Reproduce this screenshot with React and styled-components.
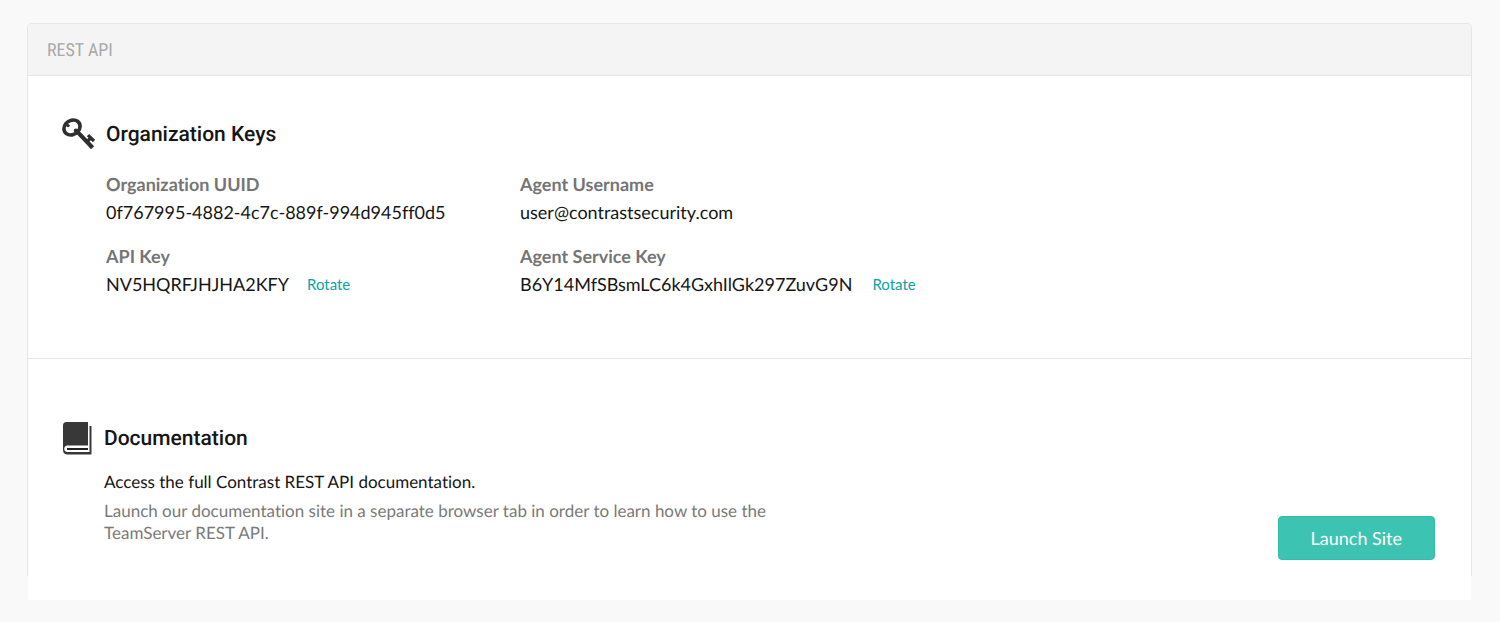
import React from "react";
import styled, { createGlobalStyle } from "styled-components";

const GlobalStyle = createGlobalStyle`
  *, *::before, *::after { box-sizing: border-box; }
  body {
    margin: 0;
    background: #f9f9f9;
    color: #161616;
    font: 18px/22px Lato, "Open Sans", sans-serif;
    font-variant-ligatures: none;
    text-rendering: geometricPrecision;
  }
  h1, h2, p, dl, dt, dd { margin: 0; }
`;

const Page = styled.main`
  padding: 23px 28px 22px 27px;
`;

const Panel = styled.div`
  border: 1px solid #e6e6e6;
  border-bottom: 0;
  border-radius: 5px 5px 0 0;
  background: #fff;
`;

const PanelHeader = styled.header`
  padding: 16px 19px 13px;
  border-bottom: 1px solid #e6e6e6;
  border-radius: 4px 4px 0 0;
  background: #f4f4f4;
`;

const PanelTitle = styled.h1`
  color: #a9a9a9;
  font: 400 18px/22px "Roboto Condensed", Roboto, sans-serif;
`;

const PanelTail = styled.div`
  height: 24px;
  margin: 0 1px;
  background: #fff;
`;

const Section = styled.section`
  display: grid;
  grid-template-columns: ${(p) => p.$icon}px 1fr;
  column-gap: 10px;
  padding: ${(p) => p.$pad};

  & + & { border-top: 1px solid #e6e6e6; }
`;

const SectionTitle = styled.h2`
  font: 500 21px/36px Roboto, sans-serif;
`;

const SectionBody = styled.div`
  grid-column: 2;
`;

const KeyList = styled.dl`
  display: grid;
  grid-template-columns: 414px 1fr;
  row-gap: 22px;
  padding-top: 20px;
`;

const KeyName = styled.dt`
  margin-bottom: 6px;
  color: #757575;
  font-weight: 700;
`;

const KeyValue = styled.dd`
  display: flex;
  gap: ${(p) => p.$gap || 18}px;
`;

const RotateButton = styled.button`
  padding: 0;
  border: 0;
  background: none;
  color: #0ca3a3;
  font: 400 15px/22px Lato, sans-serif;
  cursor: pointer;
`;

const DocsRow = styled(SectionBody)`
  display: flex;
  align-items: flex-end;
  justify-content: space-between;
  padding-top: 14px;
  font-size: 17px;
`;

const DocsText = styled.div`
  max-width: 685px;
  padding-bottom: 16px;
`;

const Lead = styled.p`
  margin-bottom: 7px;
`;

const Note = styled.p`
  color: #7a7a7a;
`;

const LaunchLink = styled.a`
  padding: 10px 32px;
  border: 1px solid #32bda9;
  border-radius: 4px;
  background: #3dc3b1;
  color: #fff;
  font-size: 18px;
  text-decoration: none;
  white-space: nowrap;
`;

const KeyIcon = () => (
  <svg width="34" height="34" viewBox="0 0 34 34" aria-hidden="true">
    <g fill="none" stroke="#2f2f2f">
      <path
        d="M4 6.4C6.4 3.4 12 1.6 15.6 4.2C19.4 7.1 18.3 11.9 15.7 14.9C12.9 18 7.7 19.2 4.3 16.6C1 14 1.4 9.7 4 6.4Z"
        strokeWidth="3.6"
      />
      <path d="M14 13.4L30.6 30.8" strokeWidth="4.2" />
      <path d="M24.6 25L28.8 21" strokeWidth="3.4" />
      <path d="M26 18.2L32 24" strokeWidth="3.2" />
    </g>
    <circle cx="6" cy="8.6" r="1.7" fill="#2f2f2f" />
    <circle cx="13.8" cy="13.6" r="2" fill="#2f2f2f" />
  </svg>
);

const BookIcon = () => (
  <svg width="32" height="34" viewBox="0 0 32 34" aria-hidden="true">
    <path
      d="M4.5 1H26V24.5H5A3.3 3.3 0 0 0 5 31H27.5V5H29.5V33.5H5A4.5 4.5 0 0 1 1 29V4.5A3.5 3.5 0 0 1 4.5 1Z"
      fill="#383838"
    />
    <path d="M5 28H26" stroke="#222" strokeWidth="2" />
  </svg>
);

const keys = [
  { name: "Organization UUID", value: "0f767995-4882-4c7c-889f-994d945ff0d5" },
  { name: "Agent Username", value: "user@contrastsecurity.com" },
  { name: "API Key", value: "NV5HQRFJHJHA2KFY", rotate: true },
  {
    name: "Agent Service Key",
    value: "B6Y14MfSBsmLC6k4GxhIlGk297ZuvG9N",
    rotate: true,
    gap: 20,
  },
];

export default function App() {
  return (
    <>
      <GlobalStyle />
      <Page>
        <Panel>
          <PanelHeader>
            <PanelTitle>REST API</PanelTitle>
          </PanelHeader>
          <Section $icon={34} $pad="41px 34px 63px">
            <KeyIcon />
            <SectionTitle>Organization Keys</SectionTitle>
            <SectionBody>
              <KeyList>
                {keys.map((k) => (
                  <div key={k.name}>
                    <KeyName>{k.name}</KeyName>
                    <KeyValue $gap={k.gap}>
                      <span>{k.value}</span>
                      {k.rotate && (
                        <RotateButton type="button" aria-label={`Rotate ${k.name}`}>
                          Rotate
                        </RotateButton>
                      )}
                    </KeyValue>
                  </div>
                ))}
              </KeyList>
            </SectionBody>
          </Section>
          <Section $icon={32} $pad="62px 36px 16px 34px">
            <BookIcon />
            <SectionTitle>Documentation</SectionTitle>
            <DocsRow>
              <DocsText>
                <Lead>Access the full Contrast REST API documentation.</Lead>
                <Note>
                  Launch our documentation site in a separate browser tab in
                  order to learn how to use the TeamServer REST API.
                </Note>
              </DocsText>
              <LaunchLink href="#documentation" target="_blank">
                Launch Site
              </LaunchLink>
            </DocsRow>
          </Section>
        </Panel>
        <PanelTail />
      </Page>
    </>
  );
}
